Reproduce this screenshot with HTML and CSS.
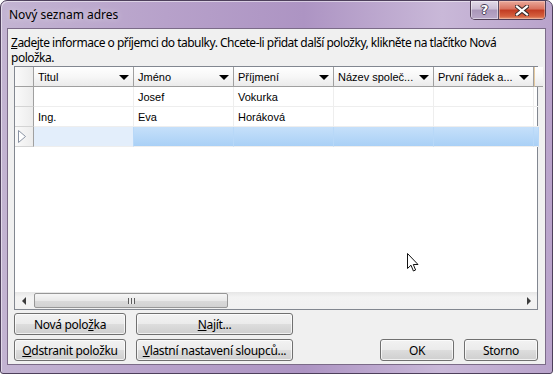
FILE: index.html
```html
<!DOCTYPE html>
<html lang="cs">
<head>
    <meta charset="UTF-8">
    <title>Nový seznam adres</title>
    <link rel="stylesheet" href="styles.css">
</head>
<body>
    <div class="window">
        <!-- Titulek okna -->
        <div class="titlebar">
            <span class="title">Nový seznam adres</span>
            <div class="caption">
                <div class="cap-btn help"><span>?</span></div>
                <div class="cap-btn close">
                    <svg width="14" height="11" viewBox="0 0 14 11">
                        <path d="M2 1.5 L12 9.5 M12 1.5 L2 9.5" stroke="#3a2a2a" stroke-width="4.2" stroke-linecap="square"/>
                        <path d="M2 1.5 L12 9.5 M12 1.5 L2 9.5" stroke="#fff" stroke-width="2.2" stroke-linecap="square"/>
                    </svg>
                </div>
            </div>
        </div>

        <div class="client">
            <p class="intro"><u>Z</u>adejte informace o příjemci do tabulky. Chcete-li přidat další položky, klikněte na tlačítko Nová položka.</p>

            <!-- Tabulka adres -->
            <div class="grid">
                <div class="rows">
                    <div class="row head">
                        <div class="rh"></div>
                        <div class="hc"><span>Titul</span><i class="drop"></i></div>
                        <div class="hc"><span>Jméno</span><i class="drop"></i></div>
                        <div class="hc"><span>Příjmení</span><i class="drop"></i></div>
                        <div class="hc"><span>Název společ...</span><i class="drop"></i></div>
                        <div class="hc"><span>První řádek a...</span><i class="drop"></i></div>
                        <div class="hc sliver"></div>
                    </div>
                    <div class="row">
                        <div class="rh"></div>
                        <div class="c"></div>
                        <div class="c">Josef</div>
                        <div class="c">Vokurka</div>
                        <div class="c"></div>
                        <div class="c"></div>
                        <div class="c"></div>
                    </div>
                    <div class="row">
                        <div class="rh"></div>
                        <div class="c">Ing.</div>
                        <div class="c">Eva</div>
                        <div class="c">Horáková</div>
                        <div class="c"></div>
                        <div class="c"></div>
                        <div class="c"></div>
                    </div>
                    <div class="row new">
                        <div class="rh">
                            <svg width="10" height="13" viewBox="0 0 10 13"><path d="M1.5 0.5 L8.5 6.5 L1.5 12.5 Z" fill="#fff" stroke="#8a93a3"/></svg>
                        </div>
                        <div class="c current"></div>
                        <div class="c"></div>
                        <div class="c"></div>
                        <div class="c"></div>
                        <div class="c"></div>
                        <div class="c"></div>
                    </div>
                </div>
                <div class="hscroll">
                    <div class="arrow left"></div>
                    <div class="track">
                        <div class="thumb"><span class="grip"></span></div>
                    </div>
                    <div class="arrow right"></div>
                </div>
            </div>

            <div class="buttons">
                <button class="btn">Nová polo<u>ž</u>ka</button>
                <button class="btn"><u>N</u>ajít...</button>
                <span></span><span></span><span></span>
                <button class="btn"><u>O</u>dstranit položku</button>
                <button class="btn"><u>V</u>lastní nastavení sloupců...</button>
                <span></span>
                <button class="btn">OK</button>
                <button class="btn">Storno</button>
            </div>
        </div>

        <svg class="cursor" width="13" height="20" viewBox="0 0 13 20">
            <path d="M0.5 0.5 L0.5 15.5 L4 12.2 L6.4 18 L8.6 17 L6.3 11.5 L11 11.5 Z" fill="#fff" stroke="#111" stroke-linejoin="miter"/>
        </svg>
    </div>
</body>
</html>
```

FILE: styles.css
```css
body {
    margin: 0;
    background: #fff;
    font-family: 'Noto Sans', 'Open Sans', sans-serif;
    font-size: 12px;
    color: #000;
}
.window {
    position: relative;
    width: 553px;
    height: 374px;
    box-sizing: border-box;
    border: 1px solid #4e405c;
    border-radius: 7px 7px 3px 3px;
    padding: 0 6px 8px 6px;
    display: flex;
    flex-direction: column;
    background: linear-gradient(to right, #c3b4d2 0%, #b7a1ca 30%, #ad94c3 55%, #c9b8d8 80%, #b9a3cb 100%);
    box-shadow: inset 1px 1px 0 rgba(255, 255, 255, 0.5);
}
.titlebar {
    height: 27px;
    display: flex;
    align-items: flex-start;
}
.title {
    margin: 6px 0 0 2px;
    line-height: 16px;
    color: #000;
    text-shadow: 0 0 6px rgba(255, 255, 255, 0.6);
}
.caption {
    margin-left: auto;
    margin-right: 0;
    display: flex;
    border: 1px solid #4f3e55;
    border-top: none;
    border-radius: 0 0 5px 5px;
    overflow: hidden;
    height: 18px;
}
.cap-btn {
    height: 18px;
    display: flex;
    align-items: center;
    justify-content: center;
}
.help {
    width: 27px;
    border-right: 1px solid #5a4a60;
    background: linear-gradient(#e2dae8 0%, #cbbfd6 45%, #a996b9 50%, #b9a8c8 100%);
    box-shadow: inset 0 0 0 1px rgba(255, 255, 255, 0.45);
}
.help span {
    font-family: 'DejaVu Sans', sans-serif;
    font-weight: bold;
    font-size: 13px;
    color: #fff;
    text-shadow: 1px 0 0 #4a3d55, -1px 0 0 #4a3d55, 0 1px 0 #4a3d55, 0 -1px 0 #4a3d55;
    line-height: 18px;
}
.close {
    width: 46px;
    background: linear-gradient(#eaa99b 0%, #d8705d 45%, #c13b22 50%, #d5603f 85%, #e59a7a 100%);
    box-shadow: inset 0 0 0 1px rgba(255, 220, 210, 0.4);
}
.client {
    flex: 1;
    border: 1px solid #7b6b88;
    background: #f0f0f0;
    padding: 0 7px 2px 2px;
    display: flex;
    flex-direction: column;
}
.intro {
    margin: 6px 0 0 1px;
    width: 510px;
    line-height: 15px;
    letter-spacing: -0.5px;
}
.grid {
    margin: 1px 0 0 4px;
    height: 244px;
    box-sizing: border-box;
    border: 1px solid #828790;
    display: flex;
    flex-direction: column;
    background: #fff;
    font-family: 'Liberation Sans', Arial, sans-serif;
    font-size: 11px;
}
.rows {
    flex: 1;
}
.row {
    display: grid;
    grid-template-columns: 19px repeat(5, 100px) 1fr;
    height: 20px;
}
.row > div {
    box-sizing: border-box;
    border-right: 1px solid #eeeeee;
    border-bottom: 1px solid #eeeeee;
}
.rh {
    background: linear-gradient(to right, #fafafa, #ececec);
    border-right: 1px solid #a0a0a0 !important;
    border-bottom: 1px solid #d4d4d4 !important;
    display: flex;
    align-items: center;
    padding-left: 2px;
}
.head .rh {
    border-bottom: 1px solid #a0a0a0 !important;
}
.hc {
    display: flex;
    align-items: center;
    padding: 0 4px 0 4px;
    background: linear-gradient(#ffffff 0%, #f7f7f7 50%, #ebebeb 100%);
    border-right: 1px solid #a0a0a0 !important;
    border-bottom: 1px solid #a0a0a0 !important;
    color: #000;
}
.hc.sliver {
    border-left: 1px solid #e4c9a0;
    border-right: none !important;
}
.drop {
    margin-left: auto;
    width: 0;
    height: 0;
    border-left: 5px solid transparent;
    border-right: 5px solid transparent;
    border-top: 5px solid #000;
    margin-top: 1px;
}
.c {
    display: flex;
    align-items: center;
    padding-left: 4px;
}
.new .c {
    background: linear-gradient(#c6e0fa, #a9d0f6);
    border-right-color: #b8d8f8;
}
.new .c.current {
    background: #e3eefb;
}
.hscroll {
    height: 17px;
    display: flex;
    background: linear-gradient(to bottom, #e6e6e6, #f3f3f3 30%, #f1f1f1);
}
.arrow {
    width: 17px;
    display: flex;
    align-items: center;
    justify-content: center;
}
.arrow::before {
    content: '';
    width: 0;
    height: 0;
    border-top: 4px solid transparent;
    border-bottom: 4px solid transparent;
}
.arrow.left::before {
    border-right: 4px solid #3c3c3c;
}
.arrow.right::before {
    border-left: 4px solid #3c3c3c;
}
.track {
    flex: 1;
    padding: 1px 0 1px 2px;
}
.thumb {
    width: 192px;
    height: 13px;
    border: 1px solid #979797;
    border-radius: 2px;
    background: linear-gradient(#f6f6f6, #e9e9e9 50%, #dadada 51%, #d2d2d2);
    display: flex;
    align-items: center;
    justify-content: center;
}
.grip {
    width: 7px;
    height: 6px;
    background: repeating-linear-gradient(to right, #5d5d5d 0 1px, #ececec 1px 3px);
}
.buttons {
    margin: 3px 0 0 4px;
    display: grid;
    grid-template-columns: 112px 157px 1fr 74px 74px;
    grid-template-rows: 22px 22px;
    column-gap: 10px;
    row-gap: 4px;
}
.buttons > span {
    display: block;
}
.btn {
    font-family: 'Noto Sans', 'Open Sans', sans-serif;
    font-size: 12px;
    letter-spacing: -0.3px;
    color: #000;
    padding: 0;
    border: 1px solid #707070;
    border-radius: 3px;
    background: linear-gradient(#f2f2f2 0%, #ebebeb 49%, #dddddd 50%, #cfcfcf 100%);
    box-shadow: inset 0 0 0 1px rgba(255, 255, 255, 0.7);
}
.cursor {
    position: absolute;
    left: 406px;
    top: 252px;
}
```
